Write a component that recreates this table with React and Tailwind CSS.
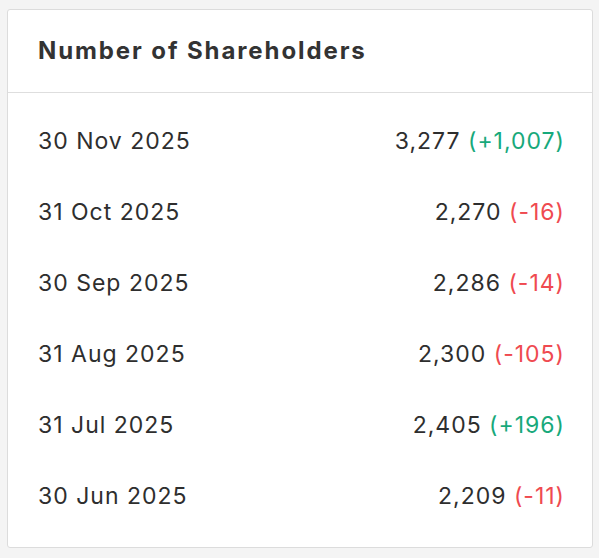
export default function App() {
  const rows = [
    ["30 Nov 2025", "3,277", "(+1,007)", true],
    ["31 Oct 2025", "2,270", "(-16)", false],
    ["30 Sep 2025", "2,286", "(-14)", false],
    ["31 Aug 2025", "2,300", "(-105)", false],
    ["31 Jul 2025", "2,405", "(+196)", true],
    ["30 Jun 2025", "2,209", "(-11)", false],
  ];
  return (
    <div className="w-[599px] h-[558px] bg-[#f4f4f4] pt-[9px] pl-[7px] pr-[6px] pb-[10px]" style={{ fontFamily: "Inter, 'Noto Sans', sans-serif" }}>
      <div className="h-[539px] bg-white border border-[#dcdcdc] rounded-[3px] flex flex-col">
        <div className="h-[83px] border-b border-[#dedede] flex items-center pl-[30px]">
          <h2 className="text-[24px] font-bold text-[#333333] tracking-[1.9px]">Number of Shareholders</h2>
        </div>
        <div className="pt-[13px] pl-[30px] pr-[27px]">
          {rows.map(([d, v, c, up]) => (
            <div key={d} className="h-[71px] flex items-center justify-between text-[23px] text-[#2e2e2e] tracking-[1px]">
              <span>{d}</span>
              <span>
                {v}{" "}
                <span className={up ? "text-[#17a97b]" : "text-[#ef4a50]"}>{c}</span>
              </span>
            </div>
          ))}
        </div>
      </div>
    </div>
  );
}
